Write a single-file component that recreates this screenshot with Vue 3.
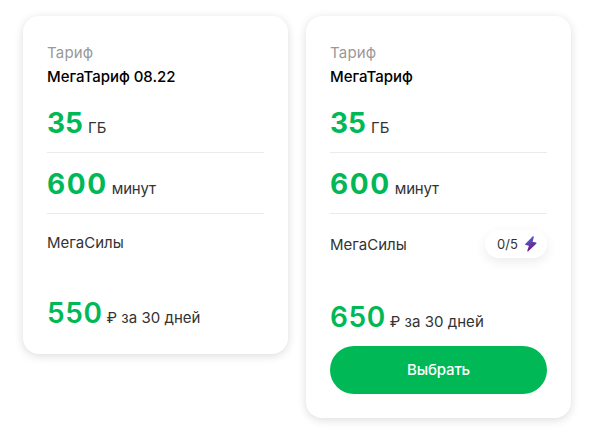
<template>
  <div class="tariffs">
    <div v-for="t in tariffs" :key="t.id" class="card">
      <div class="label">Тариф</div>
      <div class="name">{{ t.name }}</div>

      <div class="params">
        <div class="param">
          <span class="value">{{ t.gb }}</span>
          <span class="unit">ГБ</span>
        </div>
        <div class="param">
          <span class="value minutes">{{ t.minutes }}</span>
          <span class="unit unit-minutes">минут</span>
        </div>
      </div>

      <div class="powers">
        <span class="powers-title">МегаСилы</span>
        <div v-if="t.powers" class="badge">
          <span class="badge-count">{{ t.powers }}</span>
          <svg width="14" height="16" viewBox="0 0 14 16">
            <defs>
              <linearGradient id="bolt" x1="0.2" y1="0" x2="0.6" y2="1">
                <stop offset="0.25" stop-color="#5058cc" />
                <stop offset="0.85" stop-color="#731982" />
              </linearGradient>
            </defs>
            <path
              d="M8.3.7 1.5 7.7c-.6.7-.4 1.2.4 1.4l3 .6-1.6 5c-.2.8.4 1.1 1 .5l7.9-7.500c.6-.6.5-1.1-.3-1.3l-3.300-.7 1.200-4.500C10.100.3 9 0 8.300.7Z"
              fill="url(#bolt)"
            />
          </svg>
        </div>
      </div>

      <div class="price">
        <span class="value cost">{{ t.price }}</span>
        <span class="unit unit-price">₽ за 30 дней</span>
      </div>

      <button v-if="t.powers" class="btn">Выбрать</button>
    </div>
  </div>
</template>

<script setup>
const tariffs = [
  { id: "archive", name: "МегаТариф 08.22", gb: 35, minutes: 600, price: 550 },
  { id: "current", name: "МегаТариф", gb: 35, minutes: 600, price: 650, powers: "0/5" },
];
</script>

<style>
body {
  background: #fff;
}
</style>

<style scoped>
.tariffs {
  display: flex;
  align-items: flex-start;
  gap: 18px;
  padding: 16px 18px 16px 23px;
  font-family: Inter, "Liberation Sans", sans-serif;
  font-size: 15px;
  line-height: 24px;
  color: #333;
}
.card {
  box-sizing: border-box;
  width: 265px;
  padding: 25px 24px 24px;
  border-radius: 16px;
  background: #fff;
  box-shadow: 0 2px 10px rgba(0, 0, 0, 0.14);
}
.label {
  color: #999;
  letter-spacing: 0.2px;
}
.name {
  color: #000;
  font-weight: 500;
  letter-spacing: -0.02px;
  white-space: nowrap;
}
.params {
  padding-top: 3px;
}
.param {
  display: flex;
  align-items: baseline;
  gap: 5px;
  box-sizing: border-box;
  height: 61px;
  padding-top: 15px;
  border-bottom: 1px solid #ebebeb;
}
.value {
  color: #00b956;
  font-size: 28px;
  font-weight: 700;
  line-height: 32px;
}
.minutes {
  letter-spacing: 1.6px;
}
.unit {
  white-space: nowrap;
}
.unit-minutes {
  margin-left: -1px;
  letter-spacing: -0.15px;
}
.powers {
  display: flex;
  align-items: center;
  justify-content: space-between;
  padding-top: 16px;
}
.powers-title {
  padding-top: 2px;
  line-height: 22px;
}
.badge {
  display: flex;
  align-items: center;
  justify-content: space-between;
  box-sizing: border-box;
  width: 62px;
  height: 28px;
  padding: 0 9px 0 12px;
  border-radius: 14px;
  box-shadow: 0 4px 12px rgba(0, 0, 0, 0.08);
  font-size: 13px;
}
.price {
  display: flex;
  align-items: baseline;
  gap: 5px;
  height: 33px;
  margin-top: 43px;
}
.cost {
  font-weight: 600;
  letter-spacing: 0.6px;
}
.unit-price {
  margin-left: -1px;
  letter-spacing: 0.03px;
}
.btn {
  display: block;
  width: 100%;
  height: 48px;
  margin-top: 12px;
  padding: 0;
  border: 0;
  border-radius: 24px;
  background: #00b956;
  color: #fff;
  font: inherit;
  font-weight: 500;
  letter-spacing: -0.15px;
}
</style>
